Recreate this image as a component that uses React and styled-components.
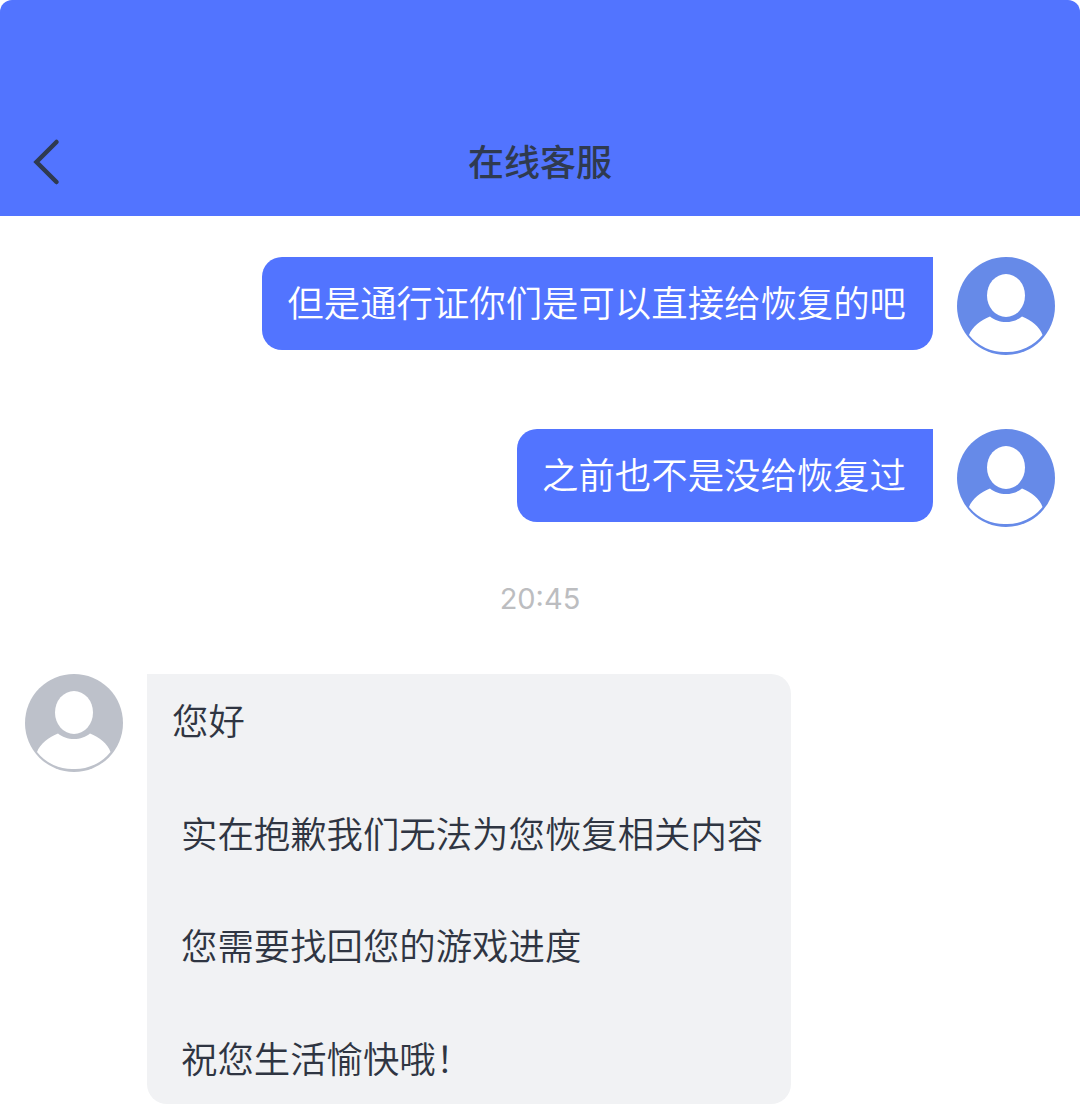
import React from 'react'
import styled, { createGlobalStyle } from 'styled-components'

const GlobalStyle = createGlobalStyle`
  html, body { margin: 0; padding: 0; background: #fff; }
  body { font-family: "Noto Sans CJK SC", "Liberation Sans", sans-serif; }
`

const Page = styled.div`
  width: 1080px;
  height: 1111px;
  overflow: hidden;
  background: #fff;
`

const Header = styled.header`
  height: 216px;
  box-sizing: border-box;
  padding: 0 32px 28px;
  background: #5274ff;
  border-radius: 12px 12px 0 0;
  display: grid;
  grid-template-columns: 100px 1fr 100px;
  align-items: end;
`

const BackButton = styled.div`
  height: 52px;
  display: flex;
  align-items: center;
`

const Title = styled.h1`
  margin: 0;
  height: 52px;
  line-height: 48px;
  text-align: center;
  font-size: 36px;
  font-weight: 500;
  color: #2f3a4f;
`

const Messages = styled.main`
  padding-top: 41px;
  display: flex;
  flex-direction: column;
`

const SentRow = styled.div`
  display: flex;
  justify-content: flex-end;
  gap: 24px;
  padding-right: 25px;
  margin-bottom: 74px;
`

const SentBubble = styled.div`
  height: 93px;
  box-sizing: border-box;
  padding: 0 27px 0 25px;
  background: #5274ff;
  border-radius: 20px 0 20px 20px;
  color: #fff;
  font-size: 36.4px;
  font-weight: 350;
  line-height: 89px;
  white-space: nowrap;
`

const Time = styled.div`
  margin-top: -22px;
  height: 40px;
  line-height: 40px;
  text-align: center;
  font-family: "Inter", "Liberation Sans", sans-serif;
  font-size: 29px;
  color: #bcbdc0;
`

const ReceivedRow = styled.div`
  margin-top: 55px;
  display: flex;
  gap: 24px;
  padding-left: 25px;
`

const ReceivedBubble = styled.div`
  width: 644px;
  height: 430px;
  box-sizing: border-box;
  padding: 17px 0 0 25px;
  background: #f1f2f4;
  border-radius: 0 20px 20px 20px;
  color: #2f3542;
  font-size: 36.4px;
  font-weight: 350;
`

const Line = styled.p`
  margin: 0 0 56.6px;
  height: 56px;
  line-height: 56px;
  white-space: nowrap;
  padding-left: ${p => (p.$indent ? '9px' : '0')};
`

const Avatar = ({ color }) => (
  <svg width="98" height="98" viewBox="0 0 98 98" style={{ flex: 'none' }}>
    <circle cx="49" cy="49" r="49" fill={color} />
    <ellipse cx="49" cy="38.5" rx="19" ry="21.5" fill="#fff" />
    <path
      d="M12 78 C15 70 24 63 33 59.5 C37 63 43 65 49 65 C55 65 61 63 65 59.5 C74 63 83 70 85.5 78 A45 45 0 0 1 49 95 A45 45 0 0 1 12 78 Z"
      fill="#fff"
    />
  </svg>
)

const BackIcon = () => (
  <svg width="32" height="50" viewBox="0 0 32 50">
    <path
      d="M24.5 5 L4.5 25 L24.5 45"
      fill="none"
      stroke="#2f3a4f"
      strokeWidth="4.5"
      strokeLinecap="round"
      strokeLinejoin="miter"
    />
  </svg>
)

const sent = ['但是通行证你们是可以直接给恢复的吧', '之前也不是没给恢复过']

const received = [
  { text: '您好' },
  { text: '实在抱歉我们无法为您恢复相关内容', indent: true },
  { text: '您需要找回您的游戏进度', indent: true },
  { text: '祝您生活愉快哦\uFF01', indent: true },
]

export default function App() {
  return (
    <Page>
      <GlobalStyle />
      <Header>
        <BackButton>
          <BackIcon />
        </BackButton>
        <Title>在线客服</Title>
      </Header>
      <Messages>
        {sent.map(text => (
          <SentRow key={text}>
            <SentBubble>{text}</SentBubble>
            <Avatar color="#668ae8" />
          </SentRow>
        ))}
        <Time>20:45</Time>
        <ReceivedRow>
          <Avatar color="#bdc1ca" />
          <ReceivedBubble>
            {received.map(line => (
              <Line key={line.text} $indent={line.indent}>
                {line.text}
              </Line>
            ))}
          </ReceivedBubble>
        </ReceivedRow>
      </Messages>
    </Page>
  )
}
